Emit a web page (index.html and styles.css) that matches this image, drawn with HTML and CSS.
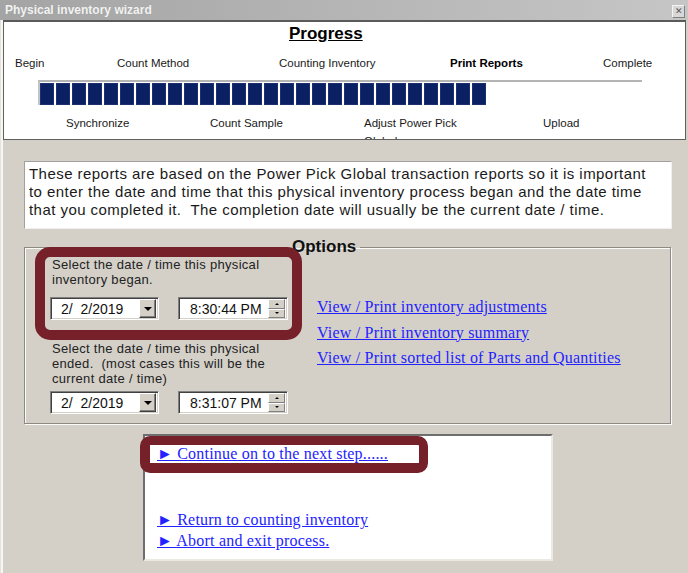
FILE: index.html
```html
<!DOCTYPE html>
<html>
<head>
<meta charset="utf-8">
<link rel="stylesheet" href="styles.css">
</head>
<body>
<div class="window">
  <div class="titlebar">
    <span class="title">Physical inventory wizard</span>
    <span class="close">&#x2715;</span>
  </div>
  <div class="panel">
    <div class="heading">Progress</div>
    <div class="steps-top">
      <span class="s1">Begin</span>
      <span class="s2">Count Method</span>
      <span class="s3">Counting Inventory</span>
      <span class="s4 current">Print Reports</span>
      <span class="s5">Complete</span>
    </div>
    <div class="bar">
      <span></span><span></span><span></span><span></span><span></span><span></span><span></span>
      <span></span><span></span><span></span><span></span><span></span><span></span><span></span>
      <span></span><span></span><span></span><span></span><span></span><span></span><span></span>
      <span></span><span></span><span></span><span></span><span></span><span></span><span></span>
    </div>
    <div class="steps-bottom">
      <span class="b1">Synchronize</span>
      <span class="b2">Count Sample</span>
      <span class="b3">Adjust Power Pick Global</span>
      <span class="b4">Upload</span>
    </div>
  </div>
  <div class="content">
    <div class="info">These reports are based on the Power Pick Global transaction reports so it is important to enter the date and time that this physical inventory process began and the date time that you completed it.&nbsp; The completion date will usually be the current date / time.</div>
    <fieldset class="options">
      <legend>Options</legend>
      <div class="opt-grid">
        <div class="dates">
          <div class="lbl">Select the date / time this physical<br>inventory began.</div>
          <div class="pickers">
            <div class="picker date"><span class="val">2/&nbsp;&nbsp;2/2019</span><span class="drop"><i></i></span></div>
            <div class="picker time"><span class="val">8:30:44 PM</span><span class="spin"><b class="up"></b><b class="down"></b></span></div>
          </div>
          <div class="lbl lbl2">Select the date / time this physical<br>ended.&nbsp; (most cases this will be the<br>current date / time)</div>
          <div class="pickers">
            <div class="picker date"><span class="val">2/&nbsp;&nbsp;2/2019</span><span class="drop"><i></i></span></div>
            <div class="picker time"><span class="val">8:31:07 PM</span><span class="spin"><b class="up"></b><b class="down"></b></span></div>
          </div>
        </div>
        <div class="links">
          <a href="#">View / Print inventory adjustments</a>
          <a href="#">View / Print inventory summary</a>
          <a href="#">View / Print sorted list of Parts and Quantities</a>
        </div>
      </div>
    </fieldset>
    <div class="nav">
      <a href="#" class="next">&#9658; Continue on to the next step......</a>
      <a href="#" class="back">&#9658; Return to counting inventory</a>
      <a href="#">&#9658; Abort and exit process.</a>
    </div>
  </div>
  <div class="mark mark1"></div>
  <div class="mark mark2"></div>
</div>
</body>
</html>
```

FILE: styles.css
```css
* { box-sizing: border-box; }
html, body { margin: 0; padding: 0; background: #d4d0c8; }
body { font-family: "Liberation Sans", Arial, sans-serif; }

.window {
  position: relative;
  width: 688px;
  height: 573px;
  overflow: hidden;
  background: linear-gradient(to right, #e4e2dc 0 1px, #f7f6f2 1px 3px, #d4d0c8 3px);
}

.titlebar {
  height: 20px;
  background: linear-gradient(to right, #a4a4a4, #c6c6c6);
  display: flex;
  align-items: center;
  justify-content: space-between;
  padding: 0 3px 0 5px;
}
.title {
  color: #f2f2f2;
  font-weight: bold;
  font-size: 12px;
  text-shadow: 0 0 1px #9a9a9a;
}
.close {
  width: 13px;
  height: 13px;
  background: #d8d8d8;
  border: 1px solid #f4f4f4;
  border-right-color: #808080;
  border-bottom-color: #808080;
  font-size: 9px;
  line-height: 11px;
  text-align: center;
  color: #555;
  margin-top: 2px;
}

.panel {
  margin-left: 3px;
  width: 683px;
  height: 120px;
  background: #fff;
  border: 1px solid #606060;
  border-top: 2px solid #5a5a5a;
  overflow: hidden;
  font-size: 11.5px;
  color: #1a1a1a;
}
.heading {
  font-size: 17px;
  font-weight: bold;
  line-height: 20px;
  text-decoration: underline;
  padding-left: 285px;
  margin-top: 2px;
  color: #000;
}
.steps-top {
  display: grid;
  grid-template-columns: 102px 162px 171px 153px auto;
  padding-left: 11px;
  margin-top: 12px;
  line-height: 14px;
}
.current { font-weight: bold; color: #000; }
.bar {
  margin: 10px 0 0 34px;
  width: 604px;
  height: 25px;
  border-top: 2px solid #b4b4b4;
  border-left: 2px solid #c4c4c4;
  display: flex;
  gap: 2px;
  padding: 1px 0 1px 0;
}
.bar span {
  width: 14px;
  height: 22px;
  background: #0b1f63;
  box-shadow: inset 0 0 0 1px #1c2f72;
}
.steps-bottom {
  display: grid;
  grid-template-columns: 144px 154px 179px auto;
  padding-left: 62px;
  margin-top: 11px;
  line-height: 14px;
}
.b3 { width: 110px; line-height: 18px; margin-top: -2px; }

.content {
  padding: 21px 0 0 24px;
}
.info {
  width: 648px;
  height: 68px;
  background: #fff;
  border: 1px solid #a0a0a0;
  border-right-color: #f0f0f0;
  border-bottom-color: #f0f0f0;
  font-size: 15px;
  letter-spacing: 0.45px;
  line-height: 18px;
  padding: 3px 20px 0 4px;
  color: #1a1a1a;
}

.options {
  margin: 8px 0 0 0;
  padding: 0;
  width: 647px;
  height: 187px;
  border: 1px solid #8c8a85;
  box-shadow: 1px 1px 0 #fbfbf8, inset 1px 1px 0 #fbfbf8;
}
.options legend {
  margin-left: 263px;
  padding: 0 4px;
  font-size: 17px;
  font-weight: bold;
  line-height: 20px;
  color: #111;
}
.opt-grid {
  display: grid;
  grid-template-columns: 266px auto;
  padding-left: 25px;
}
.lbl {
  font-size: 13px;
  letter-spacing: 0.3px;
  line-height: 15px;
  color: #222;
  padding-left: 2px;
}
.lbl2 { margin-top: 21px; }
.pickers {
  display: flex;
  gap: 19px;
  margin-top: 10px;
}
.lbl2 + .pickers { margin-top: 5px; }
.picker {
  width: 110px;
  height: 23px;
  background: #fff;
  border: 1px solid #808080;
  border-right-color: #fff;
  border-bottom-color: #fff;
  box-shadow: inset 1px 1px 0 #404040, inset -1px -1px 0 #d4d0c8;
  display: flex;
  align-items: center;
  justify-content: space-between;
  font-size: 14px;
  color: #111;
  padding: 0 2px 0 10px;
}
.picker.date { width: 109px; }
.time .val { padding-left: 1px; }
.drop {
  width: 17px;
  height: 19px;
  background: #d4d0c8;
  border: 1px solid #fff;
  border-right-color: #404040;
  border-bottom-color: #404040;
  box-shadow: inset -1px -1px 0 #808080;
  display: flex;
  align-items: center;
  justify-content: center;
}
.drop i {
  width: 0;
  height: 0;
  border-left: 4px solid transparent;
  border-right: 4px solid transparent;
  border-top: 4px solid #000;
}
.spin {
  width: 17px;
  height: 19px;
  display: flex;
  flex-direction: column;
}
.spin b {
  flex: 1;
  background: #d4d0c8;
  border: 1px solid #fff;
  border-right-color: #808080;
  border-bottom-color: #808080;
  display: flex;
  align-items: center;
  justify-content: center;
}
.spin b::after {
  content: "";
  width: 0;
  height: 0;
  border-left: 2px solid transparent;
  border-right: 2px solid transparent;
}
.spin .up::after { border-bottom: 2px solid #000; }
.spin .down::after { border-top: 2px solid #000; }

.links {
  display: flex;
  flex-direction: column;
  padding-top: 37px;
  padding-left: 1px;
}
.links a, .nav a {
  font-family: "Liberation Serif", "Times New Roman", serif;
  font-size: 16px;
  letter-spacing: 0.2px;
  color: #2323ff;
  text-decoration: underline;
  align-self: flex-start;
}
.links a { line-height: 25.5px; }

.nav {
  margin: 10px 0 0 119px;
  width: 410px;
  height: 127px;
  background: #fff;
  border: 2px solid #6e6e6e;
  border-right-color: #ece9e2;
  border-bottom-color: #ece9e2;
  display: flex;
  flex-direction: column;
  padding: 7px 0 0 12px;
}
.nav a { line-height: 21px; }
.nav .back { margin-top: 45px; }

.mark {
  position: absolute;
  border: 10px solid #76202a;
}
.mark1 {
  left: 35px;
  top: 247px;
  width: 267px;
  height: 93px;
  border-radius: 15px;
}
.mark2 {
  left: 140px;
  top: 436px;
  width: 288px;
  height: 37px;
  border-width: 9px 9px 10px 10px;
  border-radius: 10px;
}
```
